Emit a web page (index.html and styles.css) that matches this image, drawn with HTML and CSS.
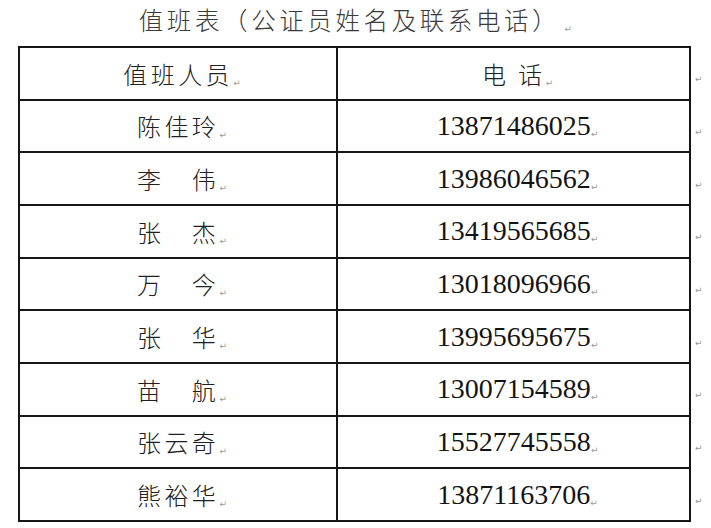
FILE: index.html
```html
<!DOCTYPE html>
<html lang="zh-CN">
<head>
<meta charset="utf-8">
<title>值班表</title>
<link rel="stylesheet" href="styles.css">
</head>
<body>
<div class="page">
  <h1 class="title">值班表（公证员姓名及联系电话）<span class="pm pm-title">↵</span></h1>
  <table class="duty">
    <tr>
      <td class="name">值班人员<span class="pm">↵</span></td>
      <td class="head-phone">电 话<span class="pm">↵</span></td>
      <td class="end"><span class="pm">↵</span></td>
    </tr>
    <tr>
      <td class="name">陈佳玲<span class="pm">↵</span></td>
      <td class="phone">13871486025<span class="pm">↵</span></td>
      <td class="end"><span class="pm">↵</span></td>
    </tr>
    <tr>
      <td class="name">李　伟<span class="pm">↵</span></td>
      <td class="phone">13986046562<span class="pm">↵</span></td>
      <td class="end"><span class="pm">↵</span></td>
    </tr>
    <tr>
      <td class="name">张　杰<span class="pm">↵</span></td>
      <td class="phone">13419565685<span class="pm">↵</span></td>
      <td class="end"><span class="pm">↵</span></td>
    </tr>
    <tr>
      <td class="name">万　今<span class="pm">↵</span></td>
      <td class="phone">13018096966<span class="pm">↵</span></td>
      <td class="end"><span class="pm">↵</span></td>
    </tr>
    <tr>
      <td class="name">张　华<span class="pm">↵</span></td>
      <td class="phone">13995695675<span class="pm">↵</span></td>
      <td class="end"><span class="pm">↵</span></td>
    </tr>
    <tr>
      <td class="name">苗　航<span class="pm">↵</span></td>
      <td class="phone">13007154589<span class="pm">↵</span></td>
      <td class="end"><span class="pm">↵</span></td>
    </tr>
    <tr>
      <td class="name">张云奇<span class="pm">↵</span></td>
      <td class="phone">15527745558<span class="pm">↵</span></td>
      <td class="end"><span class="pm">↵</span></td>
    </tr>
    <tr>
      <td class="name">熊裕华<span class="pm">↵</span></td>
      <td class="phone">13871163706<span class="pm">↵</span></td>
      <td class="end"><span class="pm">↵</span></td>
    </tr>
  </table>
</div>
</body>
</html>
```
FILE: styles.css
```css
html, body {
  margin: 0;
  padding: 0;
  background: #ffffff;
}

.page {
  width: 711px;
  height: 528px;
  overflow: hidden;
  font-family: "Noto Sans CJK SC", "Noto Sans CJK JP", sans-serif;
  color: #1c1c1c;
}

.title {
  margin: 0;
  height: 46px;
  box-sizing: border-box;
  padding-top: 0;
  line-height: 40px;
  font-size: 24.5px;
  font-weight: 300;
  letter-spacing: 3.6px;
  text-align: center;
  color: #3a3a3a;
}

.pm {
  font-family: "DejaVu Sans", sans-serif;
  font-size: 9px;
  font-weight: normal;
  letter-spacing: 0;
  color: #9a9a9a;
  display: inline-block;
  width: 8px;
  margin-right: -8px;
  vertical-align: -2px;
}

.pm-title {
  margin-left: 4px;
  margin-right: 0;
}

.duty {
  margin-left: 18px;
  border-collapse: collapse;
  table-layout: fixed;
}

.duty td {
  height: 50.67px;
  padding: 0;
  text-align: center;
  vertical-align: middle;
  border: 2px solid #161616;
}

.duty td.name,
.duty td.head-phone {
  font-size: 24px;
  font-weight: 300;
  letter-spacing: 3.4px;
  color: #202020;
}

.duty td.name {
  width: 318px;
}

.duty td.head-phone,
.duty td.phone {
  width: 352px;
}

.duty td.phone {
  font-family: "Liberation Serif", "Times New Roman", serif;
  font-size: 28px;
  letter-spacing: 0;
  color: #141414;
}

.duty td.end {
  width: 14px;
  border: none;
  text-align: left;
  padding-left: 4px;
}

.duty td.end .pm {
  margin-right: 0;
}
```
